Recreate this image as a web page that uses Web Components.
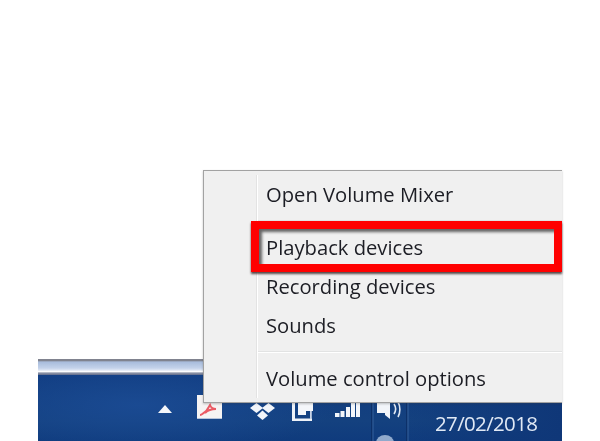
<!DOCTYPE html>
<html><head><meta charset="utf-8"><style>
html,body{margin:0;height:441px;width:600px;overflow:hidden;background:#fff}
body{display:flex;flex-direction:column;justify-content:flex-end;font-family:"Open Sans","Noto Sans",sans-serif}
</style></head><body>
<win-taskbar>
  <tray-icon slot="tray" kind="arrow" style="margin-left:120px"></tray-icon>
  <tray-icon slot="tray" kind="pdf" style="margin-left:25px"></tray-icon>
  <tray-icon slot="tray" kind="dropbox" style="margin-left:28px"></tray-icon>
  <tray-icon slot="tray" kind="doc" style="margin-left:17px"></tray-icon>
  <tray-icon slot="tray" kind="signal" style="margin-left:22px"></tray-icon>
  <tray-icon slot="tray" kind="speaker" style="margin-left:11px"></tray-icon>
  <win-clock slot="tray">27/02/2018</win-clock>
  <ctx-menu slot="menu">
    <menu-row>Open Volume Mixer</menu-row>
    <menu-sep></menu-sep>
    <menu-row>Playback devices</menu-row>
    <menu-row>Recording devices</menu-row>
    <menu-row>Sounds</menu-row>
    <menu-sep></menu-sep>
    <menu-row>Volume control options</menu-row>
    <red-highlight slot="overlay"></red-highlight>
  </ctx-menu>
</win-taskbar>
<script>
function def(name,html,init){customElements.define(name,class extends HTMLElement{constructor(){super();this.attachShadow({mode:'open'}).innerHTML=html;}connectedCallback(){if(init)init(this)}})}
def('win-taskbar',`<style>
:host{display:block;position:relative;width:524px;margin-left:38px;height:82px}
.band{height:16px;box-sizing:border-box;background:linear-gradient(#80838f 0,#80838f 1.5px,#a8bcdc 3px,#c3d2ea 9px,#dce5f3 11px,#fbfcfe 12.5px,#8f96a8 14px,#5e6b8c 16px);filter:blur(.4px)}
.tray{height:66px;display:flex;align-items:flex-start;overflow:hidden;background:radial-gradient(ellipse 200px 50px at 100px 30px,#1a4a92,transparent),linear-gradient(90deg,transparent 70%,#0f3778),linear-gradient(#103b80,#14417f 70%,#0f3b7d)}
</style><div class="band"></div><div class="tray"><slot name="tray"></slot></div><slot name="menu"></slot>`);
def('win-clock',`<style>
:host{display:block;margin-left:28px;padding-top:36px;font:20.5px/24px "Open Sans",sans-serif;letter-spacing:-.65px;color:#e0e9f5;white-space:nowrap;filter:blur(.3px)}
</style><slot></slot>`);
const icons={
arrow:[14,30,`<path d="M0 8 7 0l7 8z" fill="#f4f6fa"/>`],
pdf:[25,20,`<rect width="25" height="24" fill="#f5f3f3"/><rect x="0" y="23" width="25" height="1" fill="#b3c2da"/><path d="M3 20c2 0 3-2 5-3s3-4 5-7c1 3 3 4 6 4-4 0-8 1-11 4" fill="none" stroke="#ea5a64" stroke-width="2"/>`],
dropbox:[25,28,`<g fill="#f2f5fa"><path d="M6.500 0 13 5 6.500 10 0 5z"/><path d="M18.500 0 25 5 18.500 10 12 5z"/><path d="M12.500 7.500 18 12.500 12.500 17 7 12.500z"/></g>`],
doc:[21,28,`<path d="M0 0h3v15.500h17v2.500H0z" fill="#eef2f8"/><path d="M6 0h8v12H6z" fill="#f4f6fa"/><path d="M14 0h7v8h-7z" fill="#f4f6fa"/><path d="M18 8h1.800v8H18z" fill="#c7d3e6"/>`],
signal:[25,28,`<g fill="#f2f5fa"><rect x="0" y="10" width="4.500" height="4"/><rect x="5.500" y="8" width="4" height="6"/><rect x="11" y="4" width="4" height="10"/><rect x="16" y="0" width="4" height="14"/><rect x="21" y="0" width="4" height="14"/></g>`],
speaker:[36,27,`<rect x="0" y="-30" width="1.500" height="80" fill="#0c3069"/><rect x="1.500" y="-30" width="1" height="80" fill="#34609c"/><rect x="35" y="-30" width="1.500" height="80" fill="#0c3069"/><rect x="36.500" y="-30" width="1" height="80" fill="#34609c"/><path d="M6 0h13v17l-5-4v-2H6z" fill="#f2f5fa"/><path d="M23 2c2 3 2 7 0 10M27 0c2.500 4 2.500 11 0 15" fill="none" stroke="#dfe7f3" stroke-width="1.600"/><ellipse cx="14" cy="41" rx="9" ry="8" fill="#c8d8ee" opacity=".7"/>`]
};
def('tray-icon',`<style>:host{display:block;flex:none;line-height:0;filter:blur(.5px)}svg{display:block;overflow:visible}</style><svg></svg>`,el=>{
 const [w,top,svg]=icons[el.getAttribute('kind')];
 const s=el.shadowRoot.querySelector('svg');s.setAttribute('width',w);s.setAttribute('height',30);s.setAttribute('viewBox',`0 0 ${w} 30`);s.innerHTML=svg;el.style.marginTop=top+'px';
});
def('ctx-menu',`<style>
:host{display:block;position:absolute;left:165px;bottom:38px;width:359px;box-sizing:border-box;padding:4px 0;background:#f0f0f0;border:solid #a2a2a2;border-width:1px 0 1px 1px;box-shadow:0 1px 2px rgba(60,60,60,.3)}
.gut{position:absolute;left:52px;top:4px;bottom:4px;width:2px;background:linear-gradient(90deg,#e3e3e3 50%,#fff 50%)}
</style><div class="gut"></div><slot></slot><slot name="overlay"></slot>`);
def('menu-row',`<style>
:host{display:block;height:39px;padding-left:62px;font:20.2px/39px "Open Sans",sans-serif;color:#1c1d24;white-space:nowrap;position:relative;filter:blur(.3px)}
</style><slot></slot>`);
def('menu-sep',`<style>
:host{display:block;height:14px;box-sizing:border-box;padding:6px 0 0 52px}
i{display:block;height:2px;background:linear-gradient(#e2e3e3 50%,#fff 50%)}
</style><i></i>`);
def('red-highlight',`<style>
:host{display:block;position:absolute;left:47px;right:0;top:50px;height:51px;box-sizing:border-box;border:8px solid #ff0000;box-shadow:0 2px 2px rgba(50,30,30,.8),inset 3px 3px 3px rgba(40,40,40,.7);filter:blur(.3px)}
</style>`);
</script>
</body></html>
